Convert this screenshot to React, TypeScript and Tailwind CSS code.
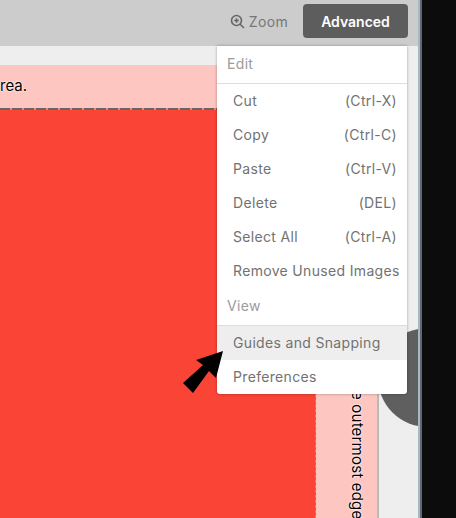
import React from "react";

const rows: [string, string][] = [
  ["Cut", "(Ctrl-X)"],
  ["Copy", "(Ctrl-C)"],
  ["Paste", "(Ctrl-V)"],
  ["Delete", "(DEL)"],
  ["Select All", "(Ctrl-A)"],
  ["Remove Unused Images", ""],
];

function Menu() {
  return (
    <div className="absolute left-[217px] top-[46px] w-[190px] bg-white rounded-b-[3px] shadow-[0_0_3px_rgba(0,0,0,0.35)] text-[14px] tracking-[0.33px] text-[#727272]">
      <div className="h-[38px] pl-[10px] pb-[2px] flex items-center text-[#9b9b9b] border-b border-[#dddddd]">Edit</div>
      <div className="flex flex-col">
        {rows.map(([a, b]) => (
          <div key={a} className="h-[34px] pl-[16px] pr-[10px] pb-[2px] flex items-center justify-between whitespace-nowrap">
            <span>{a}</span>
            {b && <span>{b}</span>}
          </div>
        ))}
      </div>
      <div className="h-[38px] pl-[10px] pb-[2px] flex items-center text-[#9b9b9b] border-b border-[#dddddd]">View</div>
      <div className="h-[34px] pl-[16px] pb-[2px] flex items-center bg-[#eeeeee]">Guides and Snapping</div>
      <div className="h-[34px] pl-[16px] pb-[2px] flex items-center">Preferences</div>
    </div>
  );
}

export default function App() {
  return (
    <div className="relative w-[456px] h-[518px] overflow-hidden flex bg-[#0c0c0c] font-['Inter','Liberation_Sans',sans-serif]">
      <div className="w-[420px] flex flex-col border-r-2 border-[#aab6c2] shadow-[2px_0_0_#5f6872]">
        <div className="h-[46px] bg-[#cccccc] flex items-start justify-end pt-[4px] pr-[10px] shrink-0">
          <div className="h-[34px] flex items-center gap-[4px] text-[14px] tracking-[0.33px] text-[#777777] mr-[15px]">
            <svg width="15" height="15" viewBox="0 0 15 15" fill="none" stroke="#666666" strokeWidth="1.6">
              <circle cx="6.5" cy="6.5" r="5" />
              <path d="M10.2 10.2L14 14M4.2 6.5h4.6M6.5 4.2v4.6" />
            </svg>
            <span>Zoom</span>
          </div>
          <div className="w-[105px] h-[34px] rounded-[4px] bg-[#5d5d5d] text-white text-[14px] font-semibold flex items-center justify-center">
            Advanced
          </div>
        </div>
        <div className="flex-1 bg-[#eeeeee] pt-[19px] pr-[39px] min-h-0 overflow-hidden">
          <div className="h-full bg-[#fec6c1] border-r-2 border-[#b9b9b9] flex flex-col">
            <div className="h-[43px] shrink-0 flex items-center text-[15px] text-black [text-shadow:0_0_2px_#fff,0_0_2px_#fff]">
              rea.
            </div>
            <div className="flex-1 flex min-h-0">
              <div className="w-[316px] flex flex-col bg-[#f94436] border-r border-dashed border-[#999999]">
                <div className="h-[2px] bg-[repeating-linear-gradient(90deg,#666666_0,#666666_10px,#f98078_10px,#f98078_12px)]" />
              </div>
            </div>
          </div>
        </div>
      </div>

      <div className="absolute left-[378px] top-[328px] w-[40px] h-[99px] overflow-hidden">
        <div className="w-[99px] h-[99px] rounded-full bg-[#5f5f5f]" />
      </div>

      <div className="absolute left-[348px] top-[391px] h-[127px] w-[18px] overflow-hidden text-[15px] tracking-[0.2px] leading-[18px] text-black [text-shadow:0_0_2px_#fff,0_0_2px_#fff] whitespace-nowrap [writing-mode:vertical-rl]">
        e outermost edge
      </div>

      <Menu />

      <svg className="absolute left-[183px] top-[351px]" width="42" height="44" viewBox="0 0 42 44">
        <path d="M40 0L33 27L26 20L10 42L0 32L20 14L13 9Z" fill="#000" />
      </svg>
    </div>
  );
}
